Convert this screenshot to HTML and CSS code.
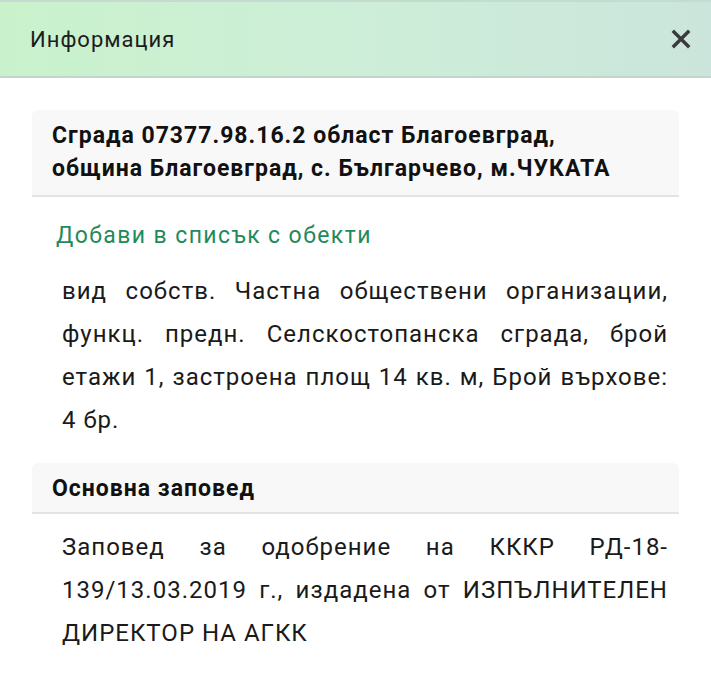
FILE: index.html
```html
<!DOCTYPE html>
<html lang="bg">
<head>
<meta charset="utf-8">
<title>Информация</title>
<link rel="stylesheet" href="styles.css">
</head>
<body>
<header class="topbar">
  <h1 class="topbar-title">Информация</h1>
  <button class="close-btn" aria-label="Затвори">
    <svg viewBox="0 0 24 24" width="24" height="24"><path d="M5 5 L19 19 M19 5 L5 19" stroke="#3a3a3a" stroke-width="3.4" stroke-linecap="square" fill="none"/></svg>
  </button>
</header>
<main class="content">
  <section class="card">
    <h2 class="card-title">Сграда 07377.98.16.2 област Благоевград, община Благоевград, с. Българчево, м.ЧУКАТА</h2>
  </section>
  <a class="add-link" href="#">Добави в списък с обекти</a>
  <p class="desc">вид собств. Частна обществени организации, функц. предн. Селскостопанска сграда, брой етажи 1, застроена площ 14 кв. м, Брой върхове: 4&nbsp;бр.</p>
  <section class="card card-small">
    <h2 class="card-title">Основна заповед</h2>
  </section>
  <p class="desc desc-order">Заповед за одобрение на КККР РД-18-139/13.03.2019 г., издадена от ИЗПЪЛНИТЕЛЕН ДИРЕКТОР НА АГКК</p>
</main>
</body>
</html>
```

FILE: styles.css
```css
* { box-sizing: border-box; }
html, body { margin: 0; padding: 0; background: #fff; }
body { font-family: Roboto, "Noto Sans", sans-serif; color: #1a1a1a; width: 711px; }

.topbar {
  height: 78px;
  display: flex;
  align-items: center;
  justify-content: space-between;
  padding: 0 16px 0 30px;
  background: linear-gradient(90deg, #c9f2cc 0%, #cdeed8 50%, #cbe5dc 100%);
  border-top: 2px solid #c4dcd0;
  border-bottom: 2px solid #c2d6cc;
}
.topbar-title {
  margin: 0;
  font-size: 22px;
  letter-spacing: 1px;
  font-weight: 400;
  color: #1c1c1c;
}
.close-btn {
  border: 0;
  background: transparent;
  padding: 0;
  width: 28px;
  height: 28px;
  display: flex;
  align-items: center;
  justify-content: center;
}

.content { padding: 32px 32px 0 32px; }

.card {
  background: #f8f8f8;
  border-radius: 6px 6px 0 0;
  border-bottom: 2px solid #e2e2e8;
  padding: 9px 36px 10px 20px;
}
.card-title {
  margin: 0;
  font-size: 23px;
  letter-spacing: 1px;
  font-weight: 700;
  line-height: 33px;
  color: #111;
}
.card-small { padding: 9px 20px 7px 20px; margin-top: 21px; }

.add-link {
  display: block;
  margin: 23px 0 0 24px;
  font-size: 23px;
  letter-spacing: 1.4px;
  line-height: 32px;
  color: #1f8a5c;
  text-decoration: none;
}

.desc {
  margin: 18px 11px 0 30px;
  font-size: 24px;
  letter-spacing: 1px;
  line-height: 43px;
  text-align: justify;
  color: #1a1a1a;
}
.desc-order { margin-top: 12px; }
```
